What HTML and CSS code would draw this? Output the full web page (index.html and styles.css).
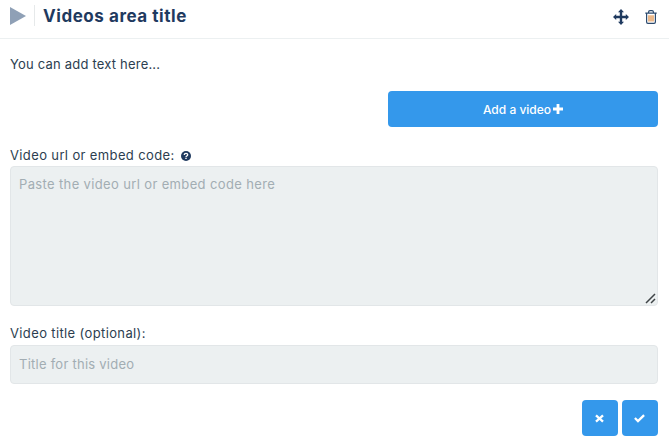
FILE: index.html
```html
<!DOCTYPE html>
<html lang="en">
<head>
<meta charset="utf-8">
<title>Videos area</title>
<link rel="stylesheet" href="styles.css">
</head>
<body>
<header class="head">
  <div class="head-left">
    <svg class="play" viewBox="0 0 16 18" width="16" height="18"><path d="M0 0L16 9L0 18Z"/></svg>
    <span class="sep"></span>
    <h1 class="title">Videos area title</h1>
  </div>
  <div class="head-right">
    <svg class="move" viewBox="0 0 16 16" width="16" height="16"><path d="M8 0L11 3.2H9.2V6.8H12.8V5L16 8L12.8 11V9.2H9.2V12.8H11L8 16L5 12.8H6.8V9.2H3.2V11L0 8L3.2 5V6.8H6.8V3.2H5Z"/></svg>
    <svg class="trash" viewBox="0 0 12 14" width="12" height="14">
      <path class="trash-line" d="M0.3 3.2H11.7M3.6 3V1.9Q3.6 0.6 5 0.6H7Q8.4 0.6 8.4 1.9V3M1.6 3.2V12.1Q1.6 13.4 2.9 13.4H9.1Q10.4 13.4 10.4 12.1V3.2"/>
      <path class="trash-bars" d="M4 5.2V11.6M6 5.2V11.6M8 5.2V11.6"/>
    </svg>
  </div>
</header>
<main class="content">
  <p class="intro">You can add text here...</p>
  <div class="add-row">
    <button class="btn add" type="button">Add a video<svg class="plus" viewBox="0 0 10 10" width="10" height="10"><path d="M3.6 0H6.4V3.6H10V6.4H6.4V10H3.6V6.4H0V3.6H3.6Z"/></svg></button>
  </div>
  <label class="label label-url" for="url">Video url or embed code:
    <svg class="help" viewBox="0 0 10 10" width="10" height="10"><circle cx="5" cy="5" r="5"/><path class="help-q" d="M3.3 3.9C3.3 2.9 4 2.4 5 2.4C6 2.4 6.7 3 6.7 3.8C6.7 5 5 4.9 5 6"/><rect class="help-dot" x="4.3" y="6.7" width="1.4" height="1.3"/></svg>
  </label>
  <div class="area-wrap">
    <textarea class="field area" id="url" placeholder="Paste the video url or embed code here"></textarea>
    <svg class="grip" viewBox="0 0 11 11" width="11" height="11"><path d="M1 10L10 1M6 10L10 6"/></svg>
  </div>
  <label class="label label-title" for="vtitle">Video title (optional):</label>
  <input class="field line" id="vtitle" type="text" placeholder="Title for this video">
  <div class="actions">
    <button class="btn square" type="button" aria-label="Cancel"><svg viewBox="0 0 10 10" width="9" height="9"><path d="M2 .6L5 3.4L8 .6L9.8 2.5L6.9 5L9.8 7.5L8 9.4L5 6.6L2 9.4L.2 7.5L3.1 5L.2 2.5Z"/></svg></button>
    <button class="btn square" type="button" aria-label="Save"><svg viewBox="0 0 12 10" width="11" height="9"><path d="M4.3 9.6L0 5.4L1.8 3.6L4.3 6L10.2.4L12 2.2Z"/></svg></button>
  </div>
</main>
</body>
</html>
```
FILE: styles.css
```css
* { box-sizing: border-box; }
html, body { margin: 0; padding: 0; background: #fff; }
body {
  width: 669px;
  height: 445px;
  overflow: hidden;
  font-family: Inter, "Noto Sans", sans-serif;
  font-size: 13px;
  color: #2c3e50;
}
.head {
  height: 39px;
  border-bottom: 1px solid #ecf0f1;
  display: flex;
  align-items: center;
  justify-content: space-between;
  padding: 0 12px 7px 10px;
}
.head-left, .head-right { display: flex; align-items: center; }
.play { fill: #8fa0b6; }
.sep { width: 1px; height: 21px; background: #e6e9ea; margin: 0 8px; }
.title {
  margin: 0;
  font-size: 17px;
  font-weight: 700;
  color: #1f3a5f;
  letter-spacing: 0.55px;
}
.head-right { gap: 16px; padding-top: 3px; }
.move { fill: #1f3a5f; }
.trash-line { fill: none; stroke: #2c4a6e; stroke-width: 1.2; }
.trash-bars { fill: none; stroke: #e08a3c; stroke-width: 1.2; }
.content { padding: 0 11px 0 10px; display: flex; flex-direction: column; }
.intro { margin: 17px 0 0; line-height: 16px; letter-spacing: 0.2px; }
.add-row { display: flex; justify-content: flex-end; margin-top: 19px; }
.btn {
  border: 0;
  background: #3498eb;
  color: #fff;
  border-radius: 4px;
  font-family: inherit;
  display: flex;
  align-items: center;
  justify-content: center;
}
.add { width: 270px; height: 36px; font-size: 12px; font-weight: 500; gap: 2px; }
.plus { fill: #fff; }
.label { display: block; line-height: 16px; letter-spacing: 0.37px; }
.label-url { margin-top: 20px; }
.label-title { margin-top: 19px; }
.help { fill: #1f3a5f; margin-left: 2px; vertical-align: -1px; }
.help-q { fill: none; stroke: #fff; stroke-width: 1.3; }
.help-dot { fill: #fff; }
.field {
  display: block;
  width: 100%;
  background: #ecf0f1;
  border: 1px solid #e2e6e8;
  border-radius: 4px;
  padding: 0 8px;
  font-family: inherit;
  font-size: 13px;
  letter-spacing: 0.25px;
  color: #2c3e50;
  outline: 0;
}
.field::placeholder { color: #a2adb3; opacity: 1; }
.area-wrap { position: relative; margin-top: 3px; }
.area {
  height: 140px;
  padding-top: 9px;
  line-height: 16px;
  letter-spacing: 0.36px;
  resize: none;
}
.grip {
  position: absolute;
  right: 2px;
  bottom: 2px;
  fill: none;
  stroke: #3f4447;
  stroke-width: 1.5;
}
.line { margin-top: 4px; height: 39px; padding-bottom: 2px; }
.actions { display: flex; justify-content: flex-end; gap: 4px; margin-top: 16px; }
.square { width: 36px; height: 36px; padding: 0 2px 0 0; }
.square svg { fill: #fff; }
```
